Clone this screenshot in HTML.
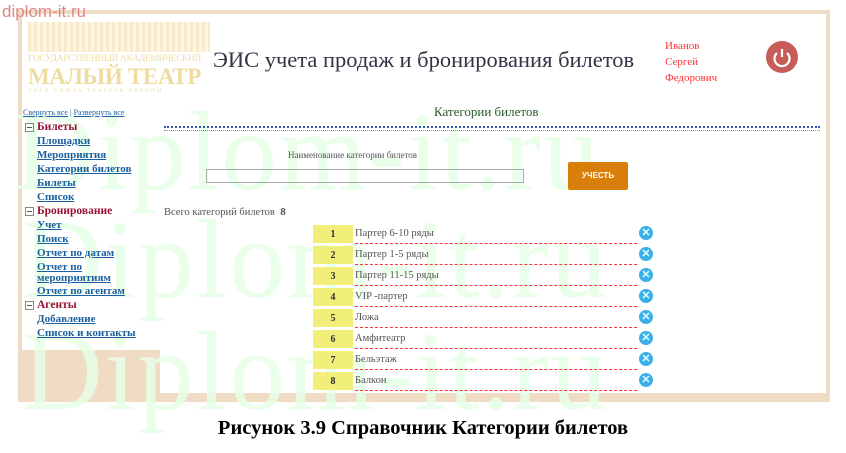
<!DOCTYPE html>
<html><head><meta charset="utf-8"><style>
body{margin:0;width:846px;height:453px;background:#fff;position:relative;overflow:hidden;font-family:"Liberation Serif",serif}
.a{position:absolute}
.frame{left:18px;top:10px;width:812px;height:392px;background:#f0dcc4}
.inner{left:22px;top:14px;width:804px;height:96px;background:#fff}
.side{left:22px;top:110px;width:138px;height:240px;background:#fff}
.main{left:160px;top:110px;width:666px;height:283px;background:#fff}
.nav a{display:block;color:#1a5f9e;font-weight:bold;text-decoration:underline;font-size:11px;line-height:14px;padding-left:14px}
.nav .h{color:#9a1030;font-weight:900;font-size:11.5px;line-height:14px;position:relative;padding-left:14px}
.nav .h:before{content:"";position:absolute;left:2px;top:3px;width:7px;height:7px;border:1px solid #888;background:#fff}
.nav .h:after{content:"";position:absolute;left:4px;top:7px;width:5px;height:1px;background:#555}
.num{left:313px;width:40px;height:18px;background:#f2ee7a;font-size:10px;text-align:center;line-height:20px;color:#333;font-weight:bold}
.nm{left:355px;width:282px;height:18px;border-bottom:1px dashed #f33;font-size:10.5px;color:#555;line-height:17px}
.x{left:639px;width:14px;height:14px;border-radius:50%;background:#3bb0e8;color:#dff;font:bold 11px/14px "Liberation Sans",sans-serif;text-align:center}
.wm{color:#e6ffe6;font-size:112px;font-family:"Liberation Serif",serif;white-space:nowrap;opacity:.85;letter-spacing:2px}
</style></head><body>
<div class="a frame"></div><div class="a inner"></div><div class="a side"></div><div class="a main"></div>
<div class="a wm" style="left:14px;top:88px">Diplom-it.ru</div>
<div class="a wm" style="left:22px;top:196px">Diplom-it.ru</div>
<div class="a wm" style="left:22px;top:308px">Diplom-it.ru</div>
<div class="a" style="left:2px;top:2px;color:#d88;font:17px 'Liberation Sans',sans-serif">diplom-it.ru</div>
<div class="a" style="left:28px;top:22px;width:182px;height:30px;background:repeating-linear-gradient(90deg,#f6e9c8 0 3px,#fbf4e2 3px 6px);opacity:.9"></div>
<div class="a" style="left:28px;top:54px;color:#efdca8;font-size:9.5px;letter-spacing:-0.4px">ГОСУДАРСТВЕННЫЙ АКАДЕМИЧЕСКИЙ</div>
<div class="a" style="left:28px;top:64px;color:#f0dca0;font-size:23px;font-weight:bold;letter-spacing:-0.3px">МАЛЫЙ ТЕАТР</div>
<div class="a" style="left:28px;top:89px;color:#ead7b0;font-size:5px;letter-spacing:2.3px">ЧЛЕН СОЮЗА ТЕАТРОВ ЕВРОПЫ</div>
<div class="a" style="left:213px;top:47px;font-size:22.5px;color:#334">ЭИС учета продаж и бронирования билетов</div>
<div class="a" style="left:665px;top:38px;color:#f33;font-size:11px;line-height:16px">Иванов<br>Сергей<br>Федорович</div>
<div class="a" style="left:766px;top:41px;width:32px;height:32px;border-radius:50%;background:#c85c58"></div>
<svg class="a" style="left:766px;top:41px" width="32" height="32"><path d="M11 12a7.5 7.5 0 1 0 10 0" fill="none" stroke="#fff" stroke-width="2.2"/><path d="M16 8v8" stroke="#fff" stroke-width="2.2"/></svg>
<div class="a" style="left:23px;top:108px;font-size:8px;color:#1a5f9e"><u>Свернуть все</u> | <u>Развернуть все</u></div>
<div class="a nav" style="left:23px;top:120px;width:137px">
<div class="h">Билеты</div><a>Площадки</a><a>Мероприятия</a><a>Категории билетов</a><a>Билеты</a><a>Список</a>
<div class="h">Бронирование</div><a>Учет</a><a>Поиск</a><a>Отчет по датам</a><a style="line-height:11px;padding-top:2px">Отчет по<br>мероприятиям</a><a>Отчет по агентам</a>
<div class="h">Агенты</div><a>Добавление</a><a>Список и контакты</a></div>
<div class="a" style="left:434px;top:104px;font-size:13px;color:#2a5a2a">Категории билетов</div>
<div class="a" style="left:164px;top:126px;width:656px;border-top:2px dotted #3355aa"></div>
<div class="a" style="left:164px;top:130px;width:656px;border-top:1px dotted #88a"></div>
<div class="a" style="left:288px;top:150px;font-size:9px;color:#555">Наименование категории билетов</div>
<div class="a" style="left:206px;top:169px;width:316px;height:12px;border:1px solid #aaa"></div>
<div class="a" style="left:568px;top:162px;width:60px;height:28px;background:#d77f08;border-radius:2px;color:#fff;font:bold 8px/28px 'Liberation Sans',sans-serif;text-align:center">УЧЕСТЬ</div>
<div class="a" style="left:164px;top:206px;font-size:10.5px;color:#555">Всего категорий билетов <b style="font-size:11px">&nbsp;8</b></div>
<div class="a num" style="top:225px">1</div><div class="a nm" style="top:225px">Партер 6-10 ряды</div><div class="a x" style="top:226px">✕</div>
<div class="a num" style="top:246px">2</div><div class="a nm" style="top:246px">Партер 1-5 ряды</div><div class="a x" style="top:247px">✕</div>
<div class="a num" style="top:267px">3</div><div class="a nm" style="top:267px">Партер 11-15 ряды</div><div class="a x" style="top:268px">✕</div>
<div class="a num" style="top:288px">4</div><div class="a nm" style="top:288px">VIP -партер</div><div class="a x" style="top:289px">✕</div>
<div class="a num" style="top:309px">5</div><div class="a nm" style="top:309px">Ложа</div><div class="a x" style="top:310px">✕</div>
<div class="a num" style="top:330px">6</div><div class="a nm" style="top:330px">Амфитеатр</div><div class="a x" style="top:331px">✕</div>
<div class="a num" style="top:351px">7</div><div class="a nm" style="top:351px">Бельэтаж</div><div class="a x" style="top:352px">✕</div>
<div class="a num" style="top:372px">8</div><div class="a nm" style="top:372px">Балкон</div><div class="a x" style="top:373px">✕</div>
<div class="a" style="left:0;width:846px;top:417px;text-align:center;font-size:20.5px;font-weight:bold">Рисунок 3.9 Справочник Категории билетов</div>
</body></html>
